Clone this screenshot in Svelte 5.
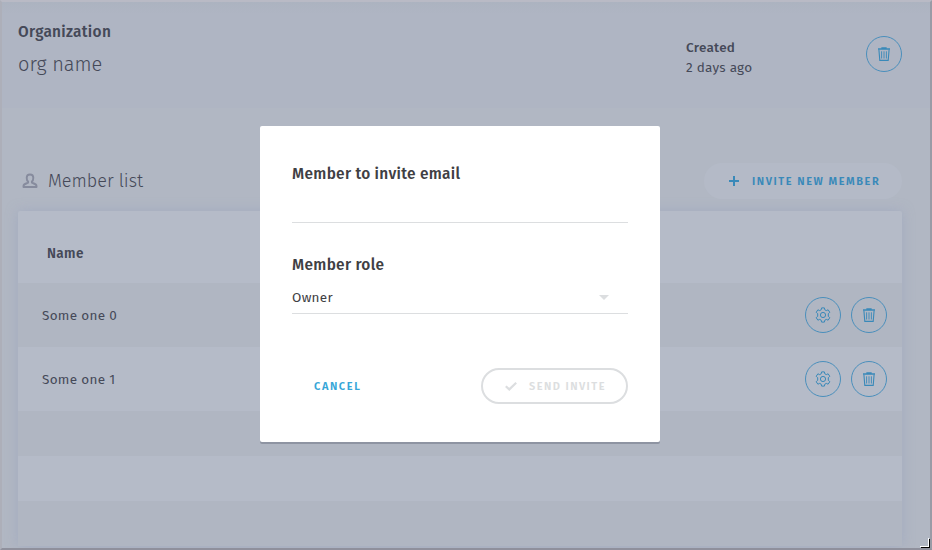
<script>
  const members = ['Some one 0', 'Some one 1'];
</script>

{#snippet trash()}
  <svg class="icon" width="14" height="16" viewBox="0 0 14 16" fill="none" stroke="currentColor">
    <path d="M1 3H13M5 2.5V1.8H9V2.5" stroke-width="1.3" />
    <path d="M1.9 3.5L2.8 14.4H11.2L12.1 3.5" stroke-width="1.1" />
    <path d="M4.6 5.3V12.5M7 5.3V12.5M9.4 5.3V12.5" stroke-width="0.9" />
  </svg>
{/snippet}

{#snippet gear()}
  <svg class="icon" width="16" height="16" viewBox="0 0 16 16" fill="none" stroke="currentColor" stroke-width="1">
    <path d="M6.6 0.9H9.4L9.8 2.8L11.3 3.6L13.1 2.8L14.8 5.3L13.3 6.7V9.3L14.8 10.7L13.1 13.2L11.3 12.4L9.8 13.2L9.4 15.1H6.6L6.2 13.2L4.7 12.4L2.9 13.2L1.2 10.7L2.7 9.3V6.7L1.2 5.3L2.9 2.8L4.7 3.6L6.2 2.8Z" stroke-linejoin="round" />
    <circle cx="8" cy="8" r="2.6" />
  </svg>
{/snippet}

<div class="page">
  <header>
    <div class="org">
      <div class="org-label"><span>Organization</span></div>
      <div class="org-name"><span>org name</span></div>
    </div>
    <div class="created">
      <div class="created-label"><span>Created</span></div>
      <div class="created-value"><span>2 days ago</span></div>
    </div>
    <button class="round" aria-label="Delete">{@render trash()}</button>
  </header>

  <main>
    <div class="toolbar">
      <svg width="16" height="16" viewBox="0 0 16 16" fill="none" stroke="#868b9d" stroke-width="1.9">
        <path d="M8 1.5C5.8 1.5 4.7 2.8 4.7 4.8C4.7 6.7 5.3 8 6.1 8.6V9.7C4.5 10.5 1.5 10.8 1.5 13V14H14.5V13C14.5 10.8 11.5 10.5 9.9 9.7V8.6C10.7 8 11.3 6.7 11.3 4.8C11.3 2.8 10.2 1.5 8 1.5Z" stroke-linejoin="round" />
      </svg>
      <h2><span>Member list</span></h2>
      <button class="invite">
        <svg width="10" height="10" viewBox="0 0 10 10" stroke="currentColor" stroke-width="2"><path d="M5 0V10M0 5H10" /></svg>
        <span>INVITE NEW MEMBER</span>
      </button>
    </div>

    <section class="table">
      <div class="thead"><span>Name</span></div>
      {#each members as member}
        <div class="row">
          <span>{member}</span>
          <button class="round" aria-label="Settings">{@render gear()}</button>
          <button class="round" aria-label="Remove">{@render trash()}</button>
        </div>
      {/each}
      <div class="row empty"></div>
      <div class="row empty"></div>
      <div class="row empty"></div>
    </section>
  </main>

  <div class="overlay">
    <div class="modal">
      <div class="label email"><span>Member to invite email</span></div>
      <div class="field"></div>
      <div class="label role"><span>Member role</span></div>
      <div class="select">
        <span>Owner</span>
        <svg width="10" height="5" viewBox="0 0 10 5" fill="#dcdee0"><path d="M0 0H10L5 5Z" /></svg>
      </div>
      <div class="actions">
        <button class="cancel"><span>CANCEL</span></button>
        <button class="send" disabled>
          <svg width="12" height="9" viewBox="0 0 12 9" fill="none" stroke="currentColor" stroke-width="2.2"><path d="M0.8 4.2L4.3 7.4L11.2 0.8" /></svg>
          <span>SEND INVITE</span>
        </button>
      </div>
    </div>
  </div>

  <svg class="grip" width="11" height="11" viewBox="0 0 11 11" fill="none" shape-rendering="crispEdges">
    <path d="M0 8.5H8.5V0" stroke="#fff" />
    <path d="M1 9.5H9.5V1" stroke="#000" />
  </svg>
</div>

<style>
  .page {
    position: relative;
    box-sizing: border-box;
    width: 932px;
    height: 550px;
    overflow: hidden;
    border: 2px solid;
    border-color: #b9bac5 #999ba6 #8f909c #adafb9;
    background: #b1b7c3;
    color: #454958;
    font-family: "Fira Sans", "Noto Sans", "Open Sans", sans-serif;
  }
  span { white-space: nowrap; }
  button {
    display: flex;
    align-items: center;
    box-sizing: border-box;
    margin: 0;
    padding: 0;
    border: 0;
    background: none;
    color: #3989b9;
    font: 600 11px/16px "Fira Sans", "Noto Sans", "Open Sans", sans-serif;
  }
  button span { padding-top: 1px; }
  svg { display: block; flex: none; }
  header {
    display: flex;
    box-sizing: border-box;
    height: 106px;
    padding: 0 28px 0 16px;
    background: linear-gradient(#acb3c0, #afb5c3 12px);
  }
  .org { flex: 1; padding-top: 20px; }
  .org-label { height: 20px; font: 500 17px/20px "Fira Sans Condensed", "Fira Sans", "Noto Sans", sans-serif; letter-spacing: 0.3px; }
  .org-name { margin-top: 9px; font: 300 20px/26px "Fira Sans", "Noto Sans", sans-serif; letter-spacing: 0; }
  .created { width: 180px; padding-top: 36px; font-size: 13.5px; line-height: 20px; letter-spacing: 0.25px; }
  .created-label { font-weight: 500; }
  .round {
    justify-content: center;
    width: 36px;
    height: 36px;
    border: 1px solid #4a8fbc;
    border-radius: 50%;
  }
  header .round { margin-top: 34px; }
  main { padding: 55px 28px 0 16px; }
  .toolbar { display: flex; align-items: center; height: 36px; padding-left: 4px; }
  h2 { flex: 1; margin: 0 0 0 10px; font: 300 18px/24px "Fira Sans", "Noto Sans", sans-serif; }
  .invite {
    width: 198px;
    height: 36px;
    padding-left: 25px;
    border-radius: 18px;
    background: #b4bac7;
  }
  .invite span { margin-left: 13px; letter-spacing: 1.55px; }
  .table {
    height: 335px;
    margin-top: 12px;
    border-radius: 2px;
    background: #b5bbc8;
    box-shadow: 0 0 12px rgba(150, 160, 190, .55);
  }
  .thead { box-sizing: border-box; height: 72px; padding: 33px 29px 0; font-size: 13.5px; line-height: 20px; font-weight: 600; letter-spacing: 0.35px; }
  .row {
    display: flex;
    align-items: center;
    gap: 10px;
    box-sizing: border-box;
    height: 64px;
    padding: 0 15px 0 24px;
    font-size: 13.5px;
    letter-spacing: 0.3px;
  }
  .row span { flex: 1; }
  .row:nth-child(even) { background: #b0b6c2; }
  .empty { height: 45px; }
  .overlay {
    position: absolute;
    inset: 0;
    padding: 124px 0 0 258px;
  }
  .modal {
    box-sizing: border-box;
    width: 400px;
    height: 316px;
    padding: 37px 32px 0;
    border-radius: 2px;
    background: #fff;
    color: #3f4044;
    box-shadow: 0 2px 0 #8e94a2;
  }
  .label { height: 22px; font: 500 17px/22px "Fira Sans Condensed", "Fira Sans", "Noto Sans", sans-serif; letter-spacing: 0.3px; }
  .field { height: 37px; border-bottom: 1px solid #dcdee0; }
  .role { margin-top: 31px; }
  .select {
    display: flex;
    align-items: center;
    justify-content: space-between;
    height: 32px;
    padding-right: 19px;
    margin-top: 5px;
    border-bottom: 1px solid #dcdee0;
    font-size: 13.5px;
    letter-spacing: 0.3px;
  }
  .actions { display: flex; justify-content: space-between; margin-top: 54px; }
  .cancel { height: 36px; margin-left: 22px; color: #36a6d8; letter-spacing: 1.6px; }
  .send {
    width: 147px;
    height: 36px;
    padding-left: 22px;
    border: 2px solid #dcdee0;
    border-radius: 18px;
    color: #dcdee0;
  }
  .send span { margin-left: 12px; letter-spacing: 1.45px; }
  .grip { position: absolute; right: -1px; bottom: -1px; }
</style>
